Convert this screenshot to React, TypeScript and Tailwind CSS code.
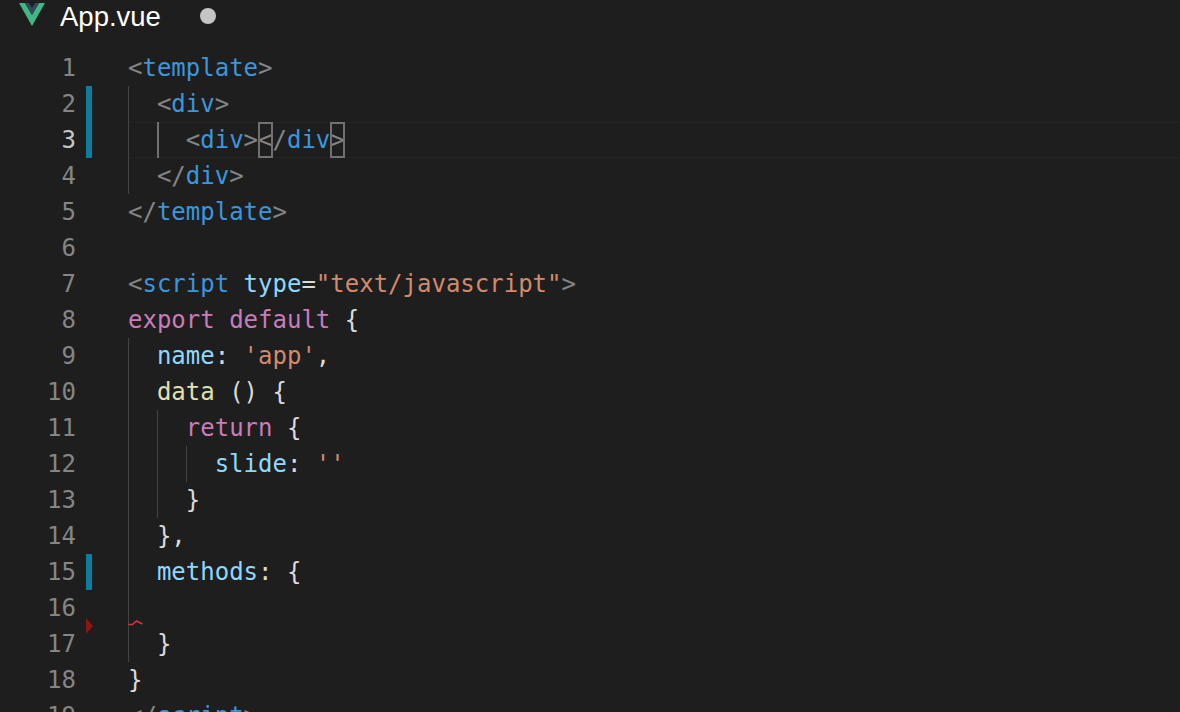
const mono = "font-['DejaVu_Sans_Mono',monospace]";
const C = { p: 'text-[#858585]', t: 'text-[#3a96dd]', a: 'text-[#8fd8ff]', s: 'text-[#d38a6a]', k: 'text-[#c97cba]', w: 'text-[#dadada]', f: 'text-[#e0e0b0]' };
type Seg = [keyof typeof C, string];
type Line = { g: number[]; segs: Seg[]; active?: boolean; bar?: boolean };
const lines: Line[] = [
  { g: [], segs: [['p', '<'], ['t', 'template'], ['p', '>']] },
  { g: [1], segs: [['p', '<'], ['t', 'div'], ['p', '>']], bar: true },
  { g: [1, 2], segs: [['p', '<'], ['t', 'div'], ['p', '>'], ['p', '<'], ['p', '/'], ['t', 'div'], ['p', '>']], bar: true, active: true },
  { g: [1], segs: [['p', '</'], ['t', 'div'], ['p', '>']] },
  { g: [], segs: [['p', '</'], ['t', 'template'], ['p', '>']] },
  { g: [], segs: [] },
  { g: [], segs: [['p', '<'], ['t', 'script'], ['w', ' '], ['a', 'type'], ['w', '='], ['s', '"text/javascript"'], ['p', '>']] },
  { g: [], segs: [['k', 'export default'], ['w', ' {']] },
  { g: [1], segs: [['a', 'name'], ['w', ': '], ['s', "'app'"], ['w', ',']] },
  { g: [1], segs: [['f', 'data'], ['w', ' () {']] },
  { g: [1, 1], segs: [['k', 'return'], ['w', ' {']] },
  { g: [1, 1, 1], segs: [['a', 'slide'], ['w', ': '], ['s', "''"]] },
  { g: [1, 1], segs: [['w', '}']] },
  { g: [1], segs: [['w', '},']] },
  { g: [1], segs: [['a', 'methods'], ['w', ': {']], bar: true },
  { g: [1], segs: [] },
  { g: [1], segs: [['w', '}']] },
  { g: [], segs: [['w', '}']] },
  { g: [], segs: [['p', '</'], ['t', 'script'], ['p', '>']] },
];

function Row({ line, n }: { line: Line; n: number }) {
  return (
    <div className="flex h-9 shrink-0 items-center">
      <div className={`w-[76px] text-right ${n === 3 ? 'text-[#c6c6c6]' : 'text-[#858585]'}`}>{n}</div>
      <div className="ml-[10px] flex h-9 w-[6px] shrink-0">
        {line.bar && <div className="h-full w-full bg-[#0c7d9d]" />}
      </div>
      <div className={`relative ml-[36px] flex h-9 flex-1 items-center`}>
        {line.active && <div className="absolute inset-0 border-y border-dotted border-[#2a2a2a]" />}
        {line.g.map((g, i) => (
          <span key={i} className={`relative h-9 w-[28.9px] shrink-0 ${g === 1 ? 'border-l border-[#444444]' : ''} ${g === 2 ? 'border-l-2 border-[#707070]' : ''}`} />
        ))}
        <span className="relative whitespace-pre">
          {line.segs.map(([c, t], i) => {
            const boxed = line.active && (i === 3 || i === 6);
            return (
              <span key={i} className={`${C[c]} ${boxed ? 'inline-block h-9 leading-9 outline-2 -outline-offset-2 outline-[#707070]' : ''}`}>{t}</span>
            );
          })}
        </span>
      </div>
    </div>
  );
}

export default function App() {
  return (
    <div className={`relative flex h-[712px] w-[1180px] flex-col overflow-hidden bg-[#1e1e1e] text-[24px] leading-9 ${mono}`}>
      <div className="flex h-[50px] shrink-0 items-start pl-[18px] pt-[3px]">
        <svg width="28" height="24" viewBox="0 0 28 24" className="shrink-0">
          <path d="M1 0h6l7 12 7-12h6L14 23z" fill="#41b883" />
          <path d="M7 0h4l3 5 3-5h4l-7 12z" fill="#35495e" />
        </svg>
        <span className="ml-[14px] font-['Liberation_Sans',sans-serif] text-[27.5px] leading-[28px] text-white">App.vue</span>
        <span className="ml-[39px] mt-[5px] h-4 w-4 rounded-full bg-[#c5c5c5]" />
      </div>
      {lines.map((l, i) => <Row key={i} line={l} n={i + 1} />)}
      <svg width="8" height="16" viewBox="0 0 8 16" className="absolute left-[86px] top-[618px]"><path d="M0 0l7 8-7 8z" fill="#8f1414" /></svg>
      <svg width="16" height="8" viewBox="0 0 16 8" className="absolute left-[128px] top-[619px]"><path d="M0.5 5.5l4 0 4-3.5 6 3" fill="none" stroke="#e0323c" strokeWidth="1.5" /></svg>
    </div>
  );
}
